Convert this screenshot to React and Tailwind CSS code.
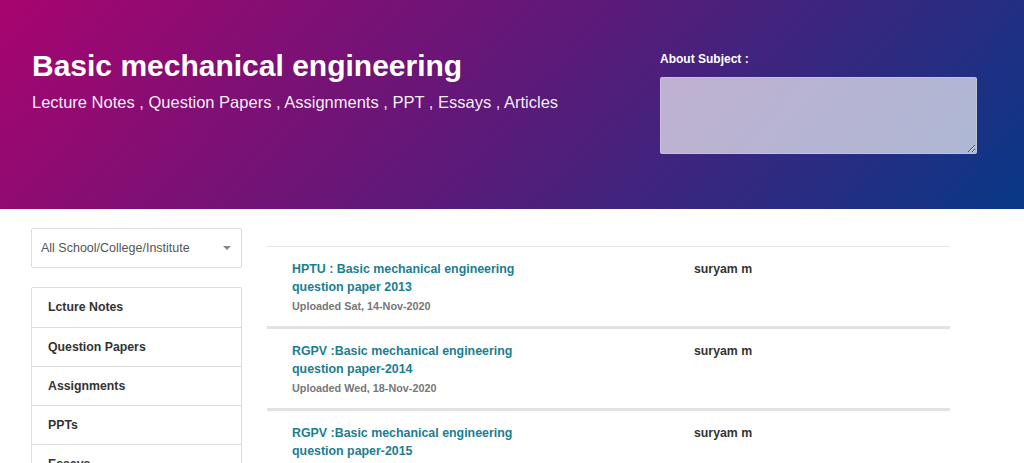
const items = [
  { title: "HPTU : Basic mechanical engineering question paper 2013", date: "Uploaded Sat, 14-Nov-2020" },
  { title: "RGPV :Basic mechanical engineering question paper-2014", date: "Uploaded Wed, 18-Nov-2020" },
  { title: "RGPV :Basic mechanical engineering question paper-2015", date: "Uploaded Wed, 18-Nov-2020" },
];

const categories = ["Lcture Notes", "Question Papers", "Assignments", "PPTs", "Essays"];

export default function App() {
  return (
    <div className="min-h-[463px] bg-white font-['Liberation_Sans',Arial,sans-serif]">
      {/* Banner */}
      <header className="h-[209px] bg-[linear-gradient(132deg,#a8046f_0%,#5c1a79_50%,#083887_100%)] flex justify-between">
        <div className="pl-8 pt-[48px] text-white">
          <h1 className="text-[30px] font-bold leading-[36px]">Basic mechanical engineering</h1>
          <p className="text-[16.5px] leading-[20px] mt-[8px] text-white/95">
            Lecture Notes , Question Papers , Assignments , PPT , Essays , Articles
          </p>
        </div>
        <div className="pt-[52px] w-[364px]">
          <label className="block text-[12px] font-bold text-white leading-[14px]">About Subject :</label>
          <textarea className="mt-[11px] block w-[317px] h-[77px] rounded-[2px] bg-white/65 border border-white/20" />
        </div>
      </header>

      <div className="flex pt-[19px]">
        {/* Sidebar */}
        <aside className="ml-[31px] w-[211px] shrink-0">
          <div className="h-[40px] border border-[#dcdcdc] rounded-[2px] flex items-center justify-between pl-[9px] pr-[10px] text-[12.5px] text-[#555]">
            <span>All School/College/Institute</span>
            <span className="w-0 h-0 border-l-[4px] border-r-[4px] border-t-[4px] border-l-transparent border-r-transparent border-t-[#888]" />
          </div>
          <ul className="mt-[19px] border border-[#dcdcdc] rounded-[2px]">
            {categories.map((c, i) => (
              <li
                key={c}
                className={`h-[39px] flex items-center pl-[16px] text-[12.3px] font-bold text-[#333] ${i > 0 ? "border-t border-[#dcdcdc]" : ""}`}
              >
                {c}
              </li>
            ))}
          </ul>
        </aside>

        {/* Documents */}
        <main className="ml-[25px] w-[683px] pt-[18px]">
          <div className="border-t border-[#e5e5e5]">
            {items.map((it, i) => (
              <div
                key={i}
                className={`flex pl-[25px] pt-[13px] h-[82px] ${i < items.length - 1 ? "border-b-[3px] border-[#e2e2e2]" : ""}`}
              >
                <div className="w-[402px]">
                  <a className="block w-[250px] text-[12.4px] font-bold leading-[18px] text-[#1a7e91]">{it.title}</a>
                  <div className="mt-[3px] text-[10.8px] font-bold leading-[14px] text-[#777]">{it.date}</div>
                </div>
                <div className="text-[12.3px] font-bold leading-[18px] text-[#333]">suryam m</div>
              </div>
            ))}
          </div>
        </main>
      </div>
    </div>
  );
}
